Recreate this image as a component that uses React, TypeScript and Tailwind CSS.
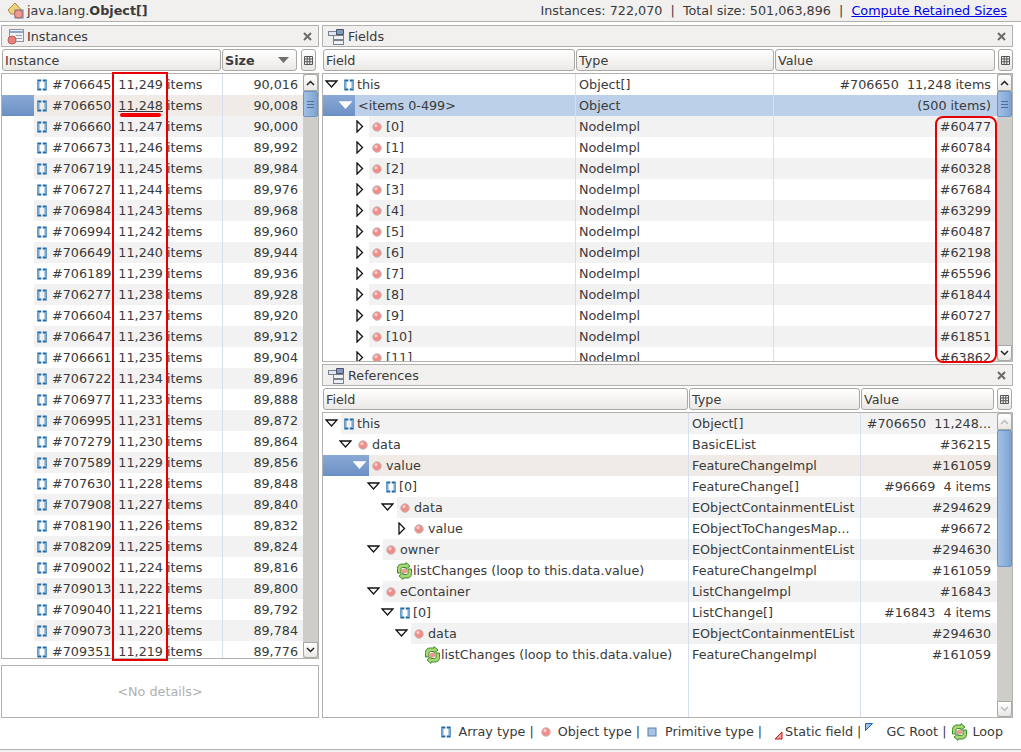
import React from 'react';

const instances = [
  ['#706645', '11,249', '90,016'],
  ['#706650', '11,248', '90,008'],
  ['#706660', '11,247', '90,000'],
  ['#706673', '11,246', '89,992'],
  ['#706719', '11,245', '89,984'],
  ['#706727', '11,244', '89,976'],
  ['#706984', '11,243', '89,968'],
  ['#706994', '11,242', '89,960'],
  ['#706649', '11,240', '89,944'],
  ['#706189', '11,239', '89,936'],
  ['#706277', '11,238', '89,928'],
  ['#706604', '11,237', '89,920'],
  ['#706647', '11,236', '89,912'],
  ['#706661', '11,235', '89,904'],
  ['#706722', '11,234', '89,896'],
  ['#706977', '11,233', '89,888'],
  ['#706995', '11,231', '89,872'],
  ['#707279', '11,230', '89,864'],
  ['#707589', '11,229', '89,856'],
  ['#707630', '11,228', '89,848'],
  ['#707908', '11,227', '89,840'],
  ['#708190', '11,226', '89,832'],
  ['#708209', '11,225', '89,824'],
  ['#709002', '11,224', '89,816'],
  ['#709013', '11,222', '89,800'],
  ['#709040', '11,221', '89,792'],
  ['#709073', '11,220', '89,784'],
  ['#709351', '11,219', '89,776'],
];

const fieldValues = ['#60477', '#60784', '#60328', '#67684', '#63299', '#60487', '#62198', '#65596', '#61844', '#60727', '#61851', '#63862'];

type Arrow = 'down' | 'right' | 'none';
type Kind = 'array' | 'object' | 'loop' | 'none';

type Row = {
  depth: number;
  arrow: Arrow;
  kind: Kind;
  name: string;
  type: string;
  value: string;
  selected?: boolean;
  plain?: boolean;
};

const references: Row[] = [
  { depth: 0, arrow: 'down', kind: 'array', name: 'this', type: 'Object[]', value: '#706650  11,248...' },
  { depth: 1, arrow: 'down', kind: 'object', name: 'data', type: 'BasicEList', value: '#36215' },
  { depth: 2, arrow: 'down', kind: 'object', name: 'value', type: 'FeatureChangeImpl', value: '#161059', selected: true },
  { depth: 3, arrow: 'down', kind: 'array', name: '[0]', type: 'FeatureChange[]', value: '#96669  4 items' },
  { depth: 4, arrow: 'down', kind: 'object', name: 'data', type: 'EObjectContainmentEList', value: '#294629' },
  { depth: 5, arrow: 'right', kind: 'object', name: 'value', type: 'EObjectToChangesMap...', value: '#96672' },
  { depth: 3, arrow: 'down', kind: 'object', name: 'owner', type: 'EObjectContainmentEList', value: '#294630' },
  { depth: 4, arrow: 'none', kind: 'loop', name: 'listChanges (loop to this.data.value)', type: 'FeatureChangeImpl', value: '#161059' },
  { depth: 3, arrow: 'down', kind: 'object', name: 'eContainer', type: 'ListChangeImpl', value: '#16843' },
  { depth: 4, arrow: 'down', kind: 'array', name: '[0]', type: 'ListChange[]', value: '#16843  4 items' },
  { depth: 5, arrow: 'down', kind: 'object', name: 'data', type: 'EObjectContainmentEList', value: '#294630' },
  { depth: 6, arrow: 'none', kind: 'loop', name: 'listChanges (loop to this.data.value)', type: 'FeatureChangeImpl', value: '#161059' },
];

const fields: Row[] = [
  { depth: 0, arrow: 'down', kind: 'array', name: 'this', type: 'Object[]', value: '#706650  11,248 items', plain: true },
  { depth: 1, arrow: 'down', kind: 'none', name: '<items 0-499>', type: 'Object', value: '(500 items)', selected: true },
  ...fieldValues.map((value, i): Row => ({
    depth: 2,
    arrow: 'right',
    kind: 'object',
    name: `[${i}]`,
    type: 'NodeImpl',
    value,
  })),
];

const ArrayIcon = () => (
  <svg width="10" height="12" viewBox="0 0 10 12" className="shrink-0">
    <path d="M4.300 1.500H1.300v9h3M5.700 1.500h3v9h-3" fill="none" stroke="#1f6aa8" strokeWidth="2" />
    <path d="M1.300 2v8M8.700 2v8" fill="none" stroke="#a9cdea" strokeWidth=".8" />
  </svg>
);

const ObjectIcon = () => (
  <svg width="10" height="10" viewBox="0 0 10 10" className="shrink-0">
    <circle cx="5" cy="5" r="4.300" fill="#f08d88" stroke="#c9bcbc" strokeWidth="1" />
    <circle cx="4" cy="3.700" r="1.600" fill="#f9cfcb" />
  </svg>
);

const LoopIcon = () => (
  <svg width="17" height="18" viewBox="0 0 17 18" className="shrink-0">
    <path d="M1.500 11V6.500C1.500 3.500 3.500 2 6 2h4V.6l4 3.400-4 3.400V5.500H6.500C5.300 5.500 5 6 5 7v4z" fill="#a6d873" stroke="#3c8c2c" />
    <path d="M15.500 7v4.500c0 3-2 4.500-4.500 4.500H7v1.400L3 14l4-3.400v1.900h3.500c1.200 0 1.500-.5 1.500-1.500V7z" fill="#a6d873" stroke="#3c8c2c" />
    <circle cx="8.500" cy="9" r="2.600" fill="#ee9a92" />
  </svg>
);

const TreeArrow = ({ dir, selected }: { dir: Arrow; selected?: boolean }) => {
  if (dir === 'none') return null;
  if (dir === 'right') {
    return (
      <svg width="8" height="13" viewBox="0 0 8 13" className="absolute top-1 left-[4px]">
        <path d="M1 1l5.500 5.500L1 12z" fill="#fff" stroke="#111" strokeWidth="1.300" />
      </svg>
    );
  }
  return (
    <svg width="13" height="8" viewBox="0 0 13 8" className="absolute top-[6px] left-[1px]">
      <path d="M1 1h11L6.500 7z" fill="#fff" stroke={selected ? '#fff' : '#111'} strokeWidth="1.300" />
    </svg>
  );
};

const InstancesIcon = () => (
  <svg width="17" height="17" viewBox="0 0 17 17" className="shrink-0">
    <rect x="2.500" y="1.500" width="14" height="12" fill="#eef1f5" stroke="#8c94a0" />
    <path d="M3 4h13" stroke="#8ba6c8" strokeWidth="2" />
    <path d="M9 7.500h6M9 10.500h6" stroke="#9aa2ad" />
    <circle cx="5" cy="12" r="4" fill="#ee8079" stroke="#b85c58" />
  </svg>
);

const StackIcon = ({ accent }: { accent: string }) => (
  <svg width="17" height="17" viewBox="0 0 17 17" className="shrink-0">
    <rect x=".5" y="3.500" width="8" height="4" fill="#dfe6ee" stroke="#79828e" />
    <rect x="5.500" y="7.500" width="10" height="4" fill="#eef2f6" stroke="#79828e" />
    <rect x="5.500" y="12.500" width="10" height="4" fill="#eef2f6" stroke="#79828e" />
    <path d="M8.500 1.500h7v5h-7z" fill={accent} stroke="#4a5668" />
  </svg>
);

const ClassIcon = () => (
  <svg width="18" height="18" viewBox="0 0 18 18" className="shrink-0">
    <path d="M8 1l6.500 7-2 4H4L1 8z" fill="#f3cf7a" stroke="#a98a3c" />
    <rect x="8" y="8" width="8" height="8" fill="#a9c6e6" stroke="#5d7fa8" />
    <circle cx="11.500" cy="12" r="4" fill="#ee9a94" stroke="#b96560" />
  </svg>
);

const CloseIcon = () => (
  <svg width="9" height="9" viewBox="0 0 9 9" className="shrink-0">
    <path d="M1 1l7 7M8 1l-7 7" stroke="#6b6b6b" strokeWidth="2" />
  </svg>
);

const ColumnsButton = () => (
  <div className="w-[15px] h-[22px] shrink-0 flex items-center justify-center rounded-[3px] border border-[#aaa8a4] bg-gradient-to-b from-white to-[#e9e7e4]">
    <svg width="9" height="9" viewBox="0 0 9 9">
      <path d="M.5.500h8v8h-8zM.5 3h8M.5 5.750h8M3.200.5v8M5.800.5v8" fill="none" stroke="#555" />
    </svg>
  </div>
);

const ColumnHeader = ({ label, width, bold, sort }: { label: string; width: string; bold?: boolean; sort?: boolean }) => (
  <div className={`${width} h-[22px] shrink-0 flex items-center justify-between px-[2px] rounded-[3px] border border-[#aaa8a4] bg-gradient-to-b from-white to-[#ebe9e6] ${bold ? 'font-bold' : ''}`}>
    <span>{label}</span>
    {sort && (
      <svg width="11" height="6" viewBox="0 0 11 6" className="mr-[5px]">
        <path d="M0 0h11L5.500 6z" fill="#6f6f6f" />
      </svg>
    )}
  </div>
);

const PanelHeader = ({ icon, title }: { icon: React.ReactNode; title: string }) => (
  <div className="h-[22px] shrink-0 flex items-center gap-[3px] pl-[5px] pr-[6px] bg-[#f1f0ee] border border-[#b3b1ad]">
    {icon}
    <span className="flex-1">{title}</span>
    <CloseIcon />
  </div>
);

const Scrollbar = ({ thumb, disabled }: { thumb: string; disabled?: boolean }) => (
  <div className="w-[15px] shrink-0 flex flex-col bg-[#cfcdc9]">
    <div className="h-[17px] shrink-0 flex items-center justify-center rounded-t-[3px] border border-[#aaa8a4] bg-gradient-to-b from-white to-[#e9e7e4]">
      <svg width="9" height="6" viewBox="0 0 9 6">
        <path d="M1 5l3.500-3.500L8 5" fill="none" stroke={disabled ? '#bbb' : '#222'} strokeWidth="1.500" />
      </svg>
    </div>
    <div className={`${thumb} shrink-0 flex flex-col gap-[2px] items-center justify-center rounded-[2px] border border-[#6d94c4] bg-gradient-to-r from-[#a3c0e4] to-[#7ea3d3]`}>
      {!disabled && (
        <>
          <div className="w-[7px] h-px bg-[#4d6f9c]" />
          <div className="w-[7px] h-px bg-[#4d6f9c]" />
          <div className="w-[7px] h-px bg-[#4d6f9c]" />
        </>
      )}
    </div>
    <div className="flex-1" />
    <div className="h-[16px] shrink-0 flex items-center justify-center rounded-b-[3px] border border-[#aaa8a4] bg-gradient-to-b from-white to-[#e9e7e4]">
      <svg width="9" height="6" viewBox="0 0 9 6">
        <path d="M1 1l3.500 3.500L8 1" fill="none" stroke={disabled ? '#bbb' : '#222'} strokeWidth="1.500" />
      </svg>
    </div>
  </div>
);

const TreeRow = ({ row, index, typeCol, valueCol }: { row: Row; index: number; typeCol: string; valueCol: string }) => {
  const stripe = row.selected ? 'bg-[#f0ebe6]' : row.plain || index % 2 === 1 ? 'bg-white' : 'bg-[#f2f2f2]';
  const isItems = row.kind === 'none';
  const rowBg = isItems ? 'bg-[#bdd0ea]' : stripe;
  return (
    <div className="h-[21px] shrink-0 flex">
      <div className="flex-1 min-w-0 flex">
        <div
          className={`relative shrink-0 ${row.selected ? 'bg-gradient-to-b from-[#8aaad6] to-[#6b90c4]' : ''}`}
          style={{ width: (isItems ? 32 : 18 + row.depth * 14) }}
        >
          {row.arrow !== 'none' && (
            <div className="absolute top-0 w-[14px] h-full" style={{ left: 1 + row.depth * 14 }}>
              <TreeArrow dir={row.arrow} selected={row.selected} />
            </div>
          )}
        </div>
        <div className={`flex-1 min-w-0 flex items-center whitespace-pre ${rowBg} ${row.kind === 'loop' ? 'pl-0' : 'pl-[3px]'}`}>
          {row.kind === 'array' && <ArrayIcon />}
          {row.kind === 'object' && <ObjectIcon />}
          {row.kind === 'loop' && (
            <div className="-ml-[1px]">
              <LoopIcon />
            </div>
          )}
          <span className={row.kind === 'array' ? 'ml-[3px]' : row.kind === 'object' ? 'ml-[4px]' : ''}>{row.name}</span>
        </div>
      </div>
      <div className={`${typeCol} shrink-0 flex items-center pl-[3px] border-l border-[#d5dff0] ${rowBg}`}>{row.type}</div>
      <div className={`${valueCol} shrink-0 flex items-center justify-end pr-[6px] whitespace-pre border-l border-[#d5dff0] ${rowBg}`}>{row.value}</div>
    </div>
  );
};

const Legend = () => (
  <div className="h-[32px] shrink-0 flex items-center justify-end gap-[4px] pr-[18px] pb-[4px] border-b border-[#b3b1ad]">
    <ArrayIcon />
    <span className="ml-[4px]">Array type</span>
    <span>|</span>
    <div className="ml-[3px]"><ObjectIcon /></div>
    <span className="ml-[3px]">Object type</span>
    <span>|</span>
    <svg width="10" height="10" viewBox="0 0 10 10" className="ml-[3px]">
      <rect x="1" y="1" width="8" height="8" fill="#a8c4e4" stroke="#5d7fa8" />
    </svg>
    <span className="ml-[4px]">Primitive type</span>
    <span>|</span>
    <svg width="9" height="9" viewBox="0 0 9 9" className="ml-[8px] mt-[8px]">
      <path d="M8 1v7H1z" fill="#f2a0a0" stroke="#c01818" />
    </svg>
    <span className="-ml-[2px]">Static field</span>
    <span>|</span>
    <svg width="8" height="8" viewBox="0 0 8 8" className="-mt-[10px]">
      <path d="M.5.500h7L.5 7.500z" fill="#9cc0ea" stroke="#1f5fb0" />
    </svg>
    <span className="ml-[9px]">GC Root</span>
    <span>|</span>
    <div className="ml-[1px]"><LoopIcon /></div>
    <span>Loop</span>
  </div>
);

export default function App() {
  return (
    <div className="relative w-[1021px] h-[752px] overflow-hidden flex flex-col bg-white text-[12.75px] leading-[15px] text-[#3a3a3a] font-['DejaVu_Sans',sans-serif]">
      {/* title bar */}
      <div className="h-[22px] shrink-0 flex items-center pl-[7px] pr-[14px] bg-[#f1f0ee] border-b border-[#b3b1ad]">
        <ClassIcon />
        <span className="ml-[2px] flex-1">
          java.lang.<b>Object[]</b>
        </span>
        <span className="whitespace-pre">Instances: 722,070  |  Total size: 501,063,896  |  </span>
        <span className="text-[#0000ee] underline">Compute Retained Sizes</span>
      </div>

      <div className="flex-1 min-h-0 flex pt-[3px] pl-[1px] pr-[8px] gap-[3px]">
        {/* instances */}
        <div className="w-[318px] shrink-0 flex flex-col">
          <PanelHeader icon={<InstancesIcon />} title="Instances" />
          <div className="h-[24px] shrink-0 flex items-end gap-[1px] pl-[1px]">
            <ColumnHeader label="Instance" width="w-[219px]" />
            <ColumnHeader label="Size" width="w-[75px]" bold sort />
            <div className="ml-[3px]">
              <ColumnsButton />
            </div>
          </div>
          <div className="h-[586px] mt-[2px] shrink-0 flex border border-[#b3b1ad] overflow-hidden">
            <div className="flex-1 min-w-0 flex flex-col overflow-hidden">
              {instances.map(([id, count, size], i) => (
                <div key={id} className="h-[21px] shrink-0 flex">
                  <div className={`w-[32px] shrink-0 ${i === 1 ? 'bg-gradient-to-b from-[#8aaad6] to-[#6b90c4]' : ''}`} />
                  <div className={`flex-1 flex ${i === 1 ? 'bg-[#f0ebe6]' : i === 0 || i % 2 === 1 ? 'bg-white' : 'bg-[#f2f2f2]'}`}>
                    <div className="w-[188px] shrink-0 flex items-center pl-[3px] whitespace-pre">
                      <ArrayIcon />
                      <span className="ml-[5px]">{id}</span>
                      <span className="ml-[7px]"><span className={i === 1 ? 'underline' : ''}>{count}</span> items</span>
                    </div>
                    <div className="flex-1 flex items-center justify-end pr-[5px] border-l border-[#d5dff0]">{size}</div>
                  </div>
                </div>
              ))}
            </div>
            <Scrollbar thumb="h-[26px]" />
          </div>
          <div className="h-[6px] shrink-0" />
          <div className="h-[53px] shrink-0 flex items-center justify-center border border-[#b3b1ad] text-[#b0b0b0]">&lt;No details&gt;</div>
        </div>

        <div className="flex-1 min-w-0 flex flex-col">
          {/* fields */}
          <PanelHeader icon={<StackIcon accent="#7f9cc0" />} title="Fields" />
          <div className="h-[24px] shrink-0 flex items-end gap-[1px] pl-[1px]">
            <ColumnHeader label="Field" width="w-[252px]" />
            <ColumnHeader label="Type" width="w-[198px]" />
            <ColumnHeader label="Value" width="w-[220px]" />
            <div className="ml-[2px]">
              <ColumnsButton />
            </div>
          </div>
          <div className="h-[289px] mt-[2px] shrink-0 flex border border-[#b3b1ad] overflow-hidden">
            <div className="flex-1 min-w-0 flex flex-col overflow-hidden">
              {fields.map((row, i) => (
                <TreeRow key={row.name} row={row} index={i} typeCol="w-[198px]" valueCol="w-[224px]" />
              ))}
            </div>
            <Scrollbar thumb="h-[26px]" />
          </div>
          <div className="h-[2px] shrink-0" />
          {/* references */}
          <PanelHeader icon={<StackIcon accent="#8a94b8" />} title="References" />
          <div className="h-[24px] shrink-0 flex items-end gap-[1px] pl-[1px]">
            <ColumnHeader label="Field" width="w-[365px]" />
            <ColumnHeader label="Type" width="w-[171px]" />
            <ColumnHeader label="Value" width="w-[133px]" />
            <div className="ml-[2px]">
              <ColumnsButton />
            </div>
          </div>
          <div className="flex-1 min-h-0 mt-[2px] flex border border-[#b3b1ad] overflow-hidden">
            <div className="flex-1 min-w-0 flex flex-col overflow-hidden">
              {references.map((row, i) => (
                <TreeRow key={i} row={row} index={i} typeCol="w-[172px]" valueCol="w-[137px]" />
              ))}
              <div className="flex-1 flex">
                <div className="flex-1" />
                <div className="w-[172px] shrink-0 border-l border-[#d5dff0]" />
                <div className="w-[137px] shrink-0 border-l border-[#d5dff0]" />
              </div>
            </div>
            <Scrollbar thumb="flex-1" disabled />
          </div>
        </div>
      </div>

      <Legend />
      <div className="h-[2px] shrink-0 bg-[#f1f0ee]" />

      {/* red annotations */}
      <div className="absolute left-[112px] top-[72px] w-[56px] h-[589px] border-[2px] border-[#e80000]" />
      <div className="absolute left-[120px] top-[113px] w-[41px] h-[4px] rounded-full bg-[#f00000]" />
      <div className="absolute left-[935px] top-[116px] w-[62px] h-[247px] rounded-[8px] border-[2px] border-[#e80000]" />
    </div>
  );
}
